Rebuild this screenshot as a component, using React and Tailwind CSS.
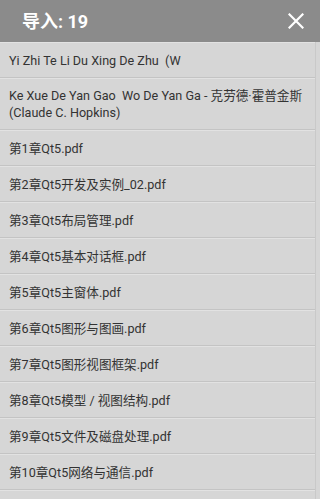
import React from 'react';

const items = [
  'Yi Zhi Te Li Du Xing De Zhu  (W',
  'Ke Xue De Yan Gao  Wo De Yan Ga - 克劳德·霍普金斯\n(Claude C. Hopkins)',
  '第1章Qt5.pdf',
  '第2章Qt5开发及实例_02.pdf',
  '第3章Qt5布局管理.pdf',
  '第4章Qt5基本对话框.pdf',
  '第5章Qt5主窗体.pdf',
  '第6章Qt5图形与图画.pdf',
  '第7章Qt5图形视图框架.pdf',
  '第8章Qt5模型 / 视图结构.pdf',
  '第9章Qt5文件及磁盘处理.pdf',
  '第10章Qt5网络与通信.pdf',
];

export default function App() {
  return (
    <div
      className="w-[320px] h-[499px] overflow-hidden bg-[#d6d6d6] flex flex-col"
      style={{ fontFamily: 'Roboto, "Noto Sans CJK SC", sans-serif' }}
    >
      {/* header */}
      <div className="h-[42px] shrink-0 bg-[#8b8b8b] flex items-center justify-between pl-[22px] pr-[13px]">
        <span className="text-white text-[18px] font-bold">导入: 19</span>
        <svg width="16" height="16" viewBox="0 0 16 16" className="mr-[3px]">
          <path d="M1.5 1.5L14.5 14.5M14.5 1.5L1.5 14.5" stroke="#fff" strokeWidth="2.2" strokeLinecap="square" />
        </svg>
      </div>

      {/* list */}
      <div className="flex-1 flex flex-col border-r border-[#c9c9c9] mr-[4px]">
        {items.map((t, i) => (
          <div
            key={i}
            className="shrink-0 border-t border-[#e2e2e2] border-b border-b-[#c4c4c4] px-[9px] py-[8px] min-h-[36px] flex items-center text-[12.6px] leading-[17px] text-[#333] whitespace-pre"
          >
            {t}
          </div>
        ))}
        <div className="flex-1 border-t border-[#e2e2e2]" />
      </div>
    </div>
  );
}
